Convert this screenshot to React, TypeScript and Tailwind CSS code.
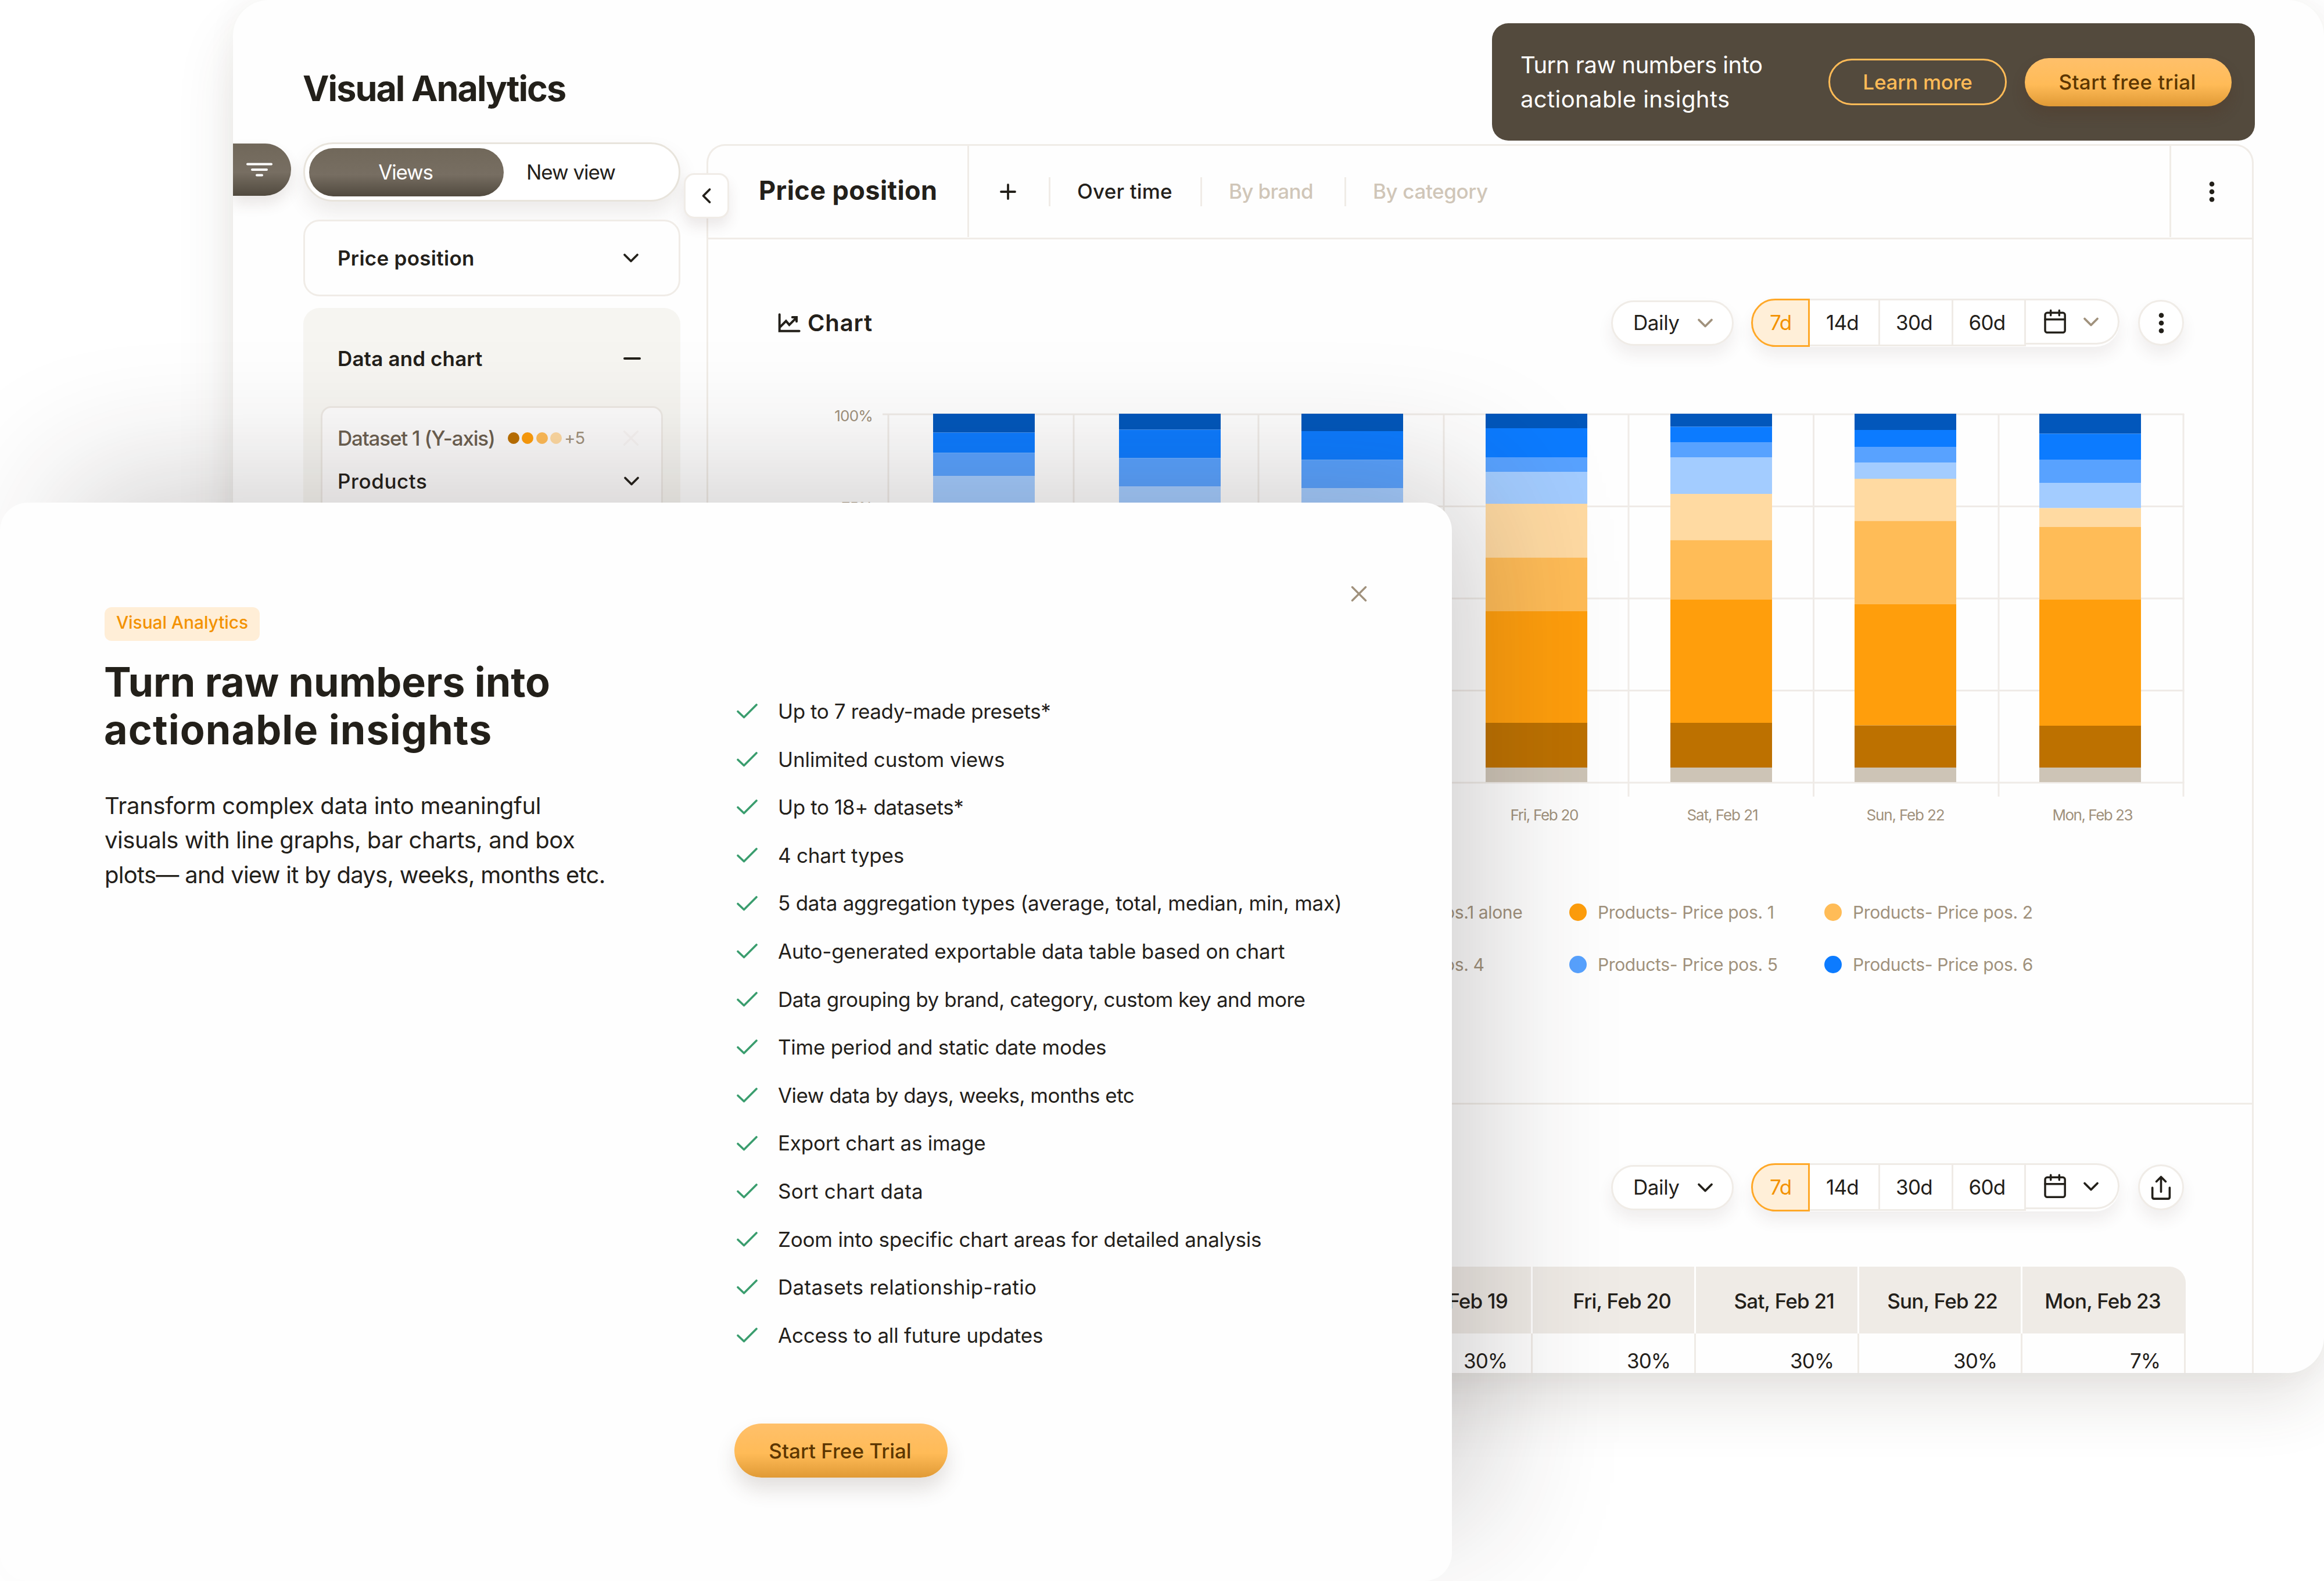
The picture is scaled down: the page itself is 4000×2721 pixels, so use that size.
import type { ReactNode } from "react";
import clsx from "clsx";

const COLORS = [
  "#0257bb",
  "#0c7bff",
  "#58a2ff",
  "#a3ccff",
  "#ffdaa2",
  "#ffbc57",
  "#ff9e0c",
  "#bd7100",
  "#cdc4b6",
];

// Segment heights from the top of each stack, in COLORS order.
const BARS = [
  { x: 1606, parts: [32.5, 35, 40, 60, 80, 100, 190, 71.5, 25] },
  { x: 1926, parts: [27.5, 49, 49, 60, 80, 90, 180, 73.5, 25] },
  { x: 2240, parts: [30, 49.5, 49, 60, 80, 90, 180, 70.5, 25] },
  { x: 2557, parts: [25, 50, 25, 55, 92.5, 92.5, 192, 77, 25] },
  { x: 2875, parts: [22.5, 26.5, 26, 63, 79.5, 102.5, 212, 77, 25] },
  { x: 3192, parts: [28, 29, 27.5, 27.5, 72.5, 143, 209, 72.5, 25] },
  { x: 3510, parts: [34.5, 44.5, 40, 43.5, 32.5, 125, 217, 72, 25] },
];

const DAYS = [
  { label: "Fri, Feb 20", x: 2658.5, width: 118 },
  { label: "Sat, Feb 21", x: 2965, width: 123 },
  { label: "Sun, Feb 22", x: 3280, width: 135 },
  { label: "Mon, Feb 23", x: 3602, width: 139 },
];

const LEGEND = [
  { label: "Price pos.1 alone", dot: "bg-[#bd7100]" },
  { label: "Products- Price pos. 1", dot: "bg-[#ff9e0c]" },
  { label: "Products- Price pos. 2", dot: "bg-[#ffbc57]" },
  { label: "Price pos. 4", dot: "bg-[#a3ccff]" },
  { label: "Products- Price pos. 5", dot: "bg-[#58a2ff]" },
  { label: "Products- Price pos. 6", dot: "bg-[#0c7bff]" },
];

const TABLE = [
  { day: "Thu, Feb 19", value: "30%" },
  { day: "Fri, Feb 20", value: "30%" },
  { day: "Sat, Feb 21", value: "30%" },
  { day: "Sun, Feb 22", value: "30%" },
  { day: "Mon, Feb 23", value: "7%" },
];

const FEATURES = [
  { text: "Up to 7 ready-made presets*", tracking: "tracking-[-0.0115em]" },
  { text: "Unlimited custom views", tracking: "tracking-[-0.0025em]" },
  { text: "Up to 18+ datasets*", tracking: "tracking-[-0.0107em]" },
  { text: "4 chart types", tracking: "tracking-[-0.0065em]" },
  {
    text: "5 data aggregation types (average, total, median, min, max)",
    tracking: "tracking-[-0.0067em]",
  },
  {
    text: "Auto-generated exportable data table based on chart",
    tracking: "tracking-[-0.0044em]",
  },
  {
    text: "Data grouping by brand, category, custom key and more",
    tracking: "tracking-[-0.013em]",
  },
  { text: "Time period and static date modes", tracking: "tracking-[-0.0074em]" },
  { text: "View data by days, weeks, months etc", tracking: "tracking-[-0.0155em]" },
  { text: "Export chart as image", tracking: "tracking-[-0.0055em]" },
  { text: "Sort chart data", tracking: "tracking-[0.0071em]" },
  {
    text: "Zoom into specific chart areas for detailed analysis",
    tracking: "tracking-[-0.0061em]",
  },
  { text: "Datasets relationship-ratio", tracking: "tracking-[0.0098em]" },
  { text: "Access to all future updates", tracking: "tracking-[-0.0054em]" },
];

function Chevron({ className }: { className?: string }) {
  return (
    <svg
      viewBox="0 0 28 18"
      className={clsx("h-[18px] w-7 shrink-0", className)}
      fill="none"
      stroke="currentColor"
      strokeWidth="3.8"
      strokeLinecap="round"
      strokeLinejoin="round"
    >
      <path d="M3 3.5 14 14.5 25 3.5" />
    </svg>
  );
}

function Kebab() {
  return (
    <svg viewBox="0 0 12 40" className="h-10 w-3" fill="currentColor">
      <circle cx="6" cy="6.8" r="4.3" />
      <circle cx="6" cy="20" r="4.3" />
      <circle cx="6" cy="33.2" r="4.3" />
    </svg>
  );
}

function CalendarIcon() {
  return (
    <svg
      viewBox="354 96 114 128"
      className="h-[43px] w-[38px] shrink-0"
      fill="none"
      stroke="currentColor"
      strokeWidth="10.5"
      strokeLinecap="round"
    >
      <rect x="360" y="114.5" width="102.5" height="102" rx="11" />
      <path d="M360 148.5H462M389 102V128M433 102V128" />
    </svg>
  );
}

function ShareIcon() {
  return (
    <svg
      viewBox="902 96 112 132"
      className="h-11 w-[37px]"
      fill="none"
      stroke="currentColor"
      strokeWidth="11"
      strokeLinecap="round"
      strokeLinejoin="round"
    >
      <path d="M913 162V211Q913 220 922 220H994Q1003 220 1003 211V162" />
      <path d="M958 184V106M934 130 958 106 982 130" />
    </svg>
  );
}

function CheckIcon() {
  return (
    <svg
      viewBox="0 0 38 28"
      className="h-7 w-[38px] shrink-0 text-[#3a9d6e]"
      fill="none"
      stroke="currentColor"
      strokeWidth="3.6"
      strokeLinecap="round"
      strokeLinejoin="round"
    >
      <path d="M3 14.5 13.5 24.5 35 3" />
    </svg>
  );
}

function Cross({ className }: { className?: string }) {
  return (
    <svg
      viewBox="0 0 30 30"
      className={clsx("size-[30px]", className)}
      stroke="currentColor"
      strokeWidth="3.4"
      strokeLinecap="round"
    >
      <path d="M3.5 3.5 26.5 26.5M26.5 3.5 3.5 26.5" />
    </svg>
  );
}

function Segment({ className, children }: { className?: string; children: ReactNode }) {
  return (
    <div
      className={clsx(
        "flex h-[82px] items-center justify-center border-y-3 border-r-3 border-[#efebe6] bg-white pr-1.5 tracking-[-0.022em]",
        className,
      )}
    >
      {children}
    </div>
  );
}

function RangeControls({ muted, action }: { muted?: boolean; action: ReactNode }) {
  const chevron = muted ? "text-[#a0917c]" : "text-[#23201a]";

  return (
    <div className="flex items-center text-[35px]">
      <div className="flex h-[78px] w-[211px] items-center justify-between rounded-full border-3 border-[#f0ece7] bg-white pr-8 pl-[35px] shadow-[0_16px_26px_rgba(80,50,50,0.08)]">
        <span className="tracking-[-0.012em]">Daily</span>
        <Chevron className={chevron} />
      </div>

      <div className="ml-[30px] flex items-start rounded-full shadow-[0_16px_26px_rgba(80,50,50,0.08)]">
        <div className="flex h-[83px] w-[101px] items-center justify-center rounded-l-full border-3 border-[#ffa828] bg-[#ffefd8] tracking-[-0.036em] text-[#f39200]">
          7d
        </div>
        <Segment className="w-[121px]">14d</Segment>
        <Segment className="w-[126px]">30d</Segment>
        <Segment className="w-[125px]">60d</Segment>
        <div className="flex h-[79px] w-[161px] items-center justify-between rounded-r-full border-y-3 border-r-3 border-[#efebe6] bg-white pr-[32px] pl-[31px]">
          <CalendarIcon />
          <Chevron className={chevron} />
        </div>
      </div>

      <div className="ml-8 flex size-[79px] items-center justify-center rounded-full border-3 border-[#f0ece7] bg-white shadow-[0_16px_26px_rgba(80,50,50,0.08)]">
        {action}
      </div>
    </div>
  );
}

function StackedChart() {
  const columns = [1529, 1848, 2166, 2485, 2803, 3121.5, 3440, 3758];
  const rows = [713, 871.5, 1030, 1188.5, 1347];

  return (
    <svg
      viewBox="1430 690 2335 730"
      className="mt-[93px] ml-[211px] block h-[730px] w-[2335px]"
    >
      <g stroke="#efebe7" strokeWidth="3">
        {columns.map((x) => (
          <path key={x} d={`M${x} 713V1371`} />
        ))}
        {rows.map((y) => (
          <path key={y} d={`M1519 ${y}H3759.5`} />
        ))}
      </g>

      {BARS.map(({ x, parts }) => {
        let y = 712;
        return parts.map((height, i) => {
          const top = y;
          y += height;
          return <rect key={`${x}-${i}`} x={x} y={top} width="175" height={height} fill={COLORS[i]} />;
        });
      })}

      <g fill="#a0917c" fontSize="26">
        <text x="1502" y="725" textAnchor="end" letterSpacing="-0.8">
          100%
        </text>
        <text x="1502" y="883" textAnchor="end" letterSpacing="-0.8">
          75%
        </text>
        {DAYS.map((day) => (
          <text key={day.label} x={day.x} y="1411.5" textAnchor="middle" textLength={day.width}>
            {day.label}
          </text>
        ))}
      </g>
    </svg>
  );
}

function Sidebar() {
  return (
    <aside className="-mt-[2px] ml-[21px] w-[649px] shrink-0">
      <div className="flex h-[102px] items-center rounded-full border-3 border-[#e8e4dc] bg-white px-[7px] text-[35px] shadow-[0_18px_34px_rgba(80,60,50,0.1)]">
        <div className="flex h-[83px] w-[335px] items-center justify-center rounded-full bg-linear-to-b from-[#71685a] via-[#776e62] via-55% to-[#514a3f] pr-[3px] tracking-[-0.035em] text-white">
          Views
        </div>
        <span className="ml-[39px] tracking-[-0.03em]">New view</span>
      </div>

      <div className="mt-[31px] flex h-[132px] items-center justify-between rounded-[28px] border-3 border-[#f0ece7] bg-[#fefefe] pr-[68px] pl-[56px] text-[35px] font-semibold tracking-[0.0083em]">
        Price position
        <Chevron />
      </div>

      <div className="mt-5 h-[500px] rounded-[28px] bg-[#f6f5f1] px-[30px] pt-[52px]">
        <div className="flex h-[70px] items-center justify-between pr-[38px] pl-[29px] text-[35px] font-semibold tracking-[0.0035em]">
          Data and chart
          <span className="h-1 w-[30px] rounded-full bg-[#23201a]" />
        </div>

        <div className="mt-[47px] h-[400px] rounded-[18px] border-3 border-[#ece8e3] bg-[#fcfbfb] pt-[27px] pr-[37px] pl-[26px] text-[35px] font-medium">
          <div className="flex h-[50px] items-center">
            <span className="tracking-[-0.0345em] text-[#6b5f50]">Dataset 1 (Y-axis)</span>
            <div className="ml-[22px] flex gap-[4.5px]">
              <span className="size-[20px] rounded-full bg-[#bd7100]" />
              <span className="size-[20px] rounded-full bg-[#ff9e0c]" />
              <span className="size-[20px] rounded-full bg-[#ffbc57]" />
              <span className="size-[20px] rounded-full bg-[#ffdaa2]" />
            </div>
            <span className="ml-1 text-[29px] font-normal tracking-[-0.03em] text-[#a0917c]">
              +5
            </span>
            <Cross className="ml-auto text-[#f7f4f3]" />
          </div>
          <div className="mt-6 flex h-[50px] items-center justify-between tracking-[0.0165em]">
            Products
            <Chevron />
          </div>
        </div>
      </div>
    </aside>
  );
}

function Panel() {
  return (
    <main className="relative mt-px ml-[45px] h-[2200px] w-[2663px] shrink-0 rounded-t-[32px] border-x-3 border-t-3 border-[#f0ece7]">
      <div className="absolute top-[47px] -left-[42px] flex size-[78px] items-center justify-center rounded-[18px] border-3 border-[#f0ece7] bg-white shadow-[0_14px_22px_rgba(80,50,50,0.1)]">
        <Chevron className="rotate-90" />
      </div>

      <div className="flex h-[161px] items-center border-b-3 border-[#f0ece7] pb-px text-[35px] font-medium">
        <h2 className="flex h-full w-[449px] items-center border-r-3 border-[#f0ece7] pb-1 pl-[87px] text-[45px] font-bold tracking-[0.0093em]">
          Price position
        </h2>
        <svg
          viewBox="0 0 28 28"
          className="mr-[56px] ml-[53px] size-7"
          stroke="currentColor"
          strokeWidth="3.8"
          strokeLinecap="round"
        >
          <path d="M14 2V26M2 14H26" />
        </svg>
        <div className="flex h-[50px] w-[261px] items-center border-l-3 border-[#f0ece7] pl-[46px] tracking-[0.0053em]">
          Over time
        </div>
        <div className="flex h-[50px] w-[248px] items-center border-l-3 border-[#f0ece7] pl-[46px] tracking-[-0.0179em] text-[#d0c6b8]">
          By brand
        </div>
        <div className="flex h-[50px] items-center border-l-3 border-[#f0ece7] pl-[46px] tracking-[-0.0112em] text-[#d0c6b8]">
          By category
        </div>
        <div className="ml-auto flex h-full w-[142px] items-center justify-center border-l-3 border-[#f0ece7]">
          <Kebab />
        </div>
      </div>

      <section className="h-[1489px] border-b-3 border-[#f0ece7] pt-[102px]">
        <div className="flex items-center justify-between pr-[117px] pl-[120px]">
          <h3 className="flex items-center gap-3 text-[40px] font-semibold tracking-[0.0217em]">
            <svg
              viewBox="57 117 116 100"
              className="h-[33px] w-[39px]"
              fill="none"
              stroke="currentColor"
              strokeWidth="12"
              strokeLinecap="round"
            >
              <path d="M64 124V210H167M66 190 98 158 115 178 152 141M131 138H153V160" />
            </svg>
            Chart
          </h3>
          <RangeControls muted action={<Kebab />} />
        </div>

        <StackedChart />

        {/* the first column runs under the modal */}
        <div className="mt-[105px] grid auto-rows-[90px] grid-cols-[361px_439px_440px] pl-[1121px] text-[30px] text-[#a0917c]">
          {LEGEND.map((item) => (
            <div key={item.label} className="flex items-center gap-[19px] tracking-[-0.012em]">
              <span className={clsx("size-[30px] rounded-full", item.dot)} />
              {item.label}
            </div>
          ))}
        </div>
      </section>

      <section className="pt-[101px]">
        <div className="flex justify-end pr-[117px]">
          <RangeControls action={<ShareIcon />} />
        </div>

        <div className="mt-[95px] mr-[114px] flex justify-end text-[35px] tracking-[-0.022em]">
          {TABLE.map((cell, i) => {
            const last = i === TABLE.length - 1;
            return (
              <div key={cell.day} className="w-[281px]">
                <div
                  className={clsx(
                    "flex h-[115px] items-center justify-end bg-[#efebe6] pt-1 font-medium",
                    last ? "rounded-tr-[28px] pr-[43px]" : "border-r-3 border-white pr-[40px]",
                  )}
                >
                  {cell.day}
                </div>
                <div className="flex h-[94px] items-center justify-end border-r-3 border-[#efebe6] pr-[41px] tracking-[-0.03em]">
                  {cell.value}
                </div>
              </div>
            );
          })}
        </div>
      </section>
    </main>
  );
}

function AnalyticsWindow() {
  return (
    <div className="ml-[401px] h-[2363px] w-[3599px] rounded-[62px] bg-[#fefefe] shadow-[0_56px_110px_-10px_rgba(70,60,45,0.14),0_0_50px_rgba(70,60,45,0.05)]">
      <div className="h-full overflow-hidden rounded-[62px]">
        <header className="flex h-[247px] items-start justify-between pr-[119px] pl-[120px]">
          <h1 className="mt-[112px] text-[61px] leading-[80px] font-bold tracking-[-0.032em]">
            Visual Analytics
          </h1>

          <div className="mt-10 flex h-[202px] w-[1313px] items-center rounded-[28px] bg-[#534a3d] pr-10 pl-[49px]">
            <p className="text-[40px] leading-[59.5px] text-white">
              <span className="block tracking-[-0.0115em]">Turn raw numbers into</span>
              <span className="block tracking-[0.0098em]">actionable insights</span>
            </p>
            <div className="ml-auto flex h-20 w-[307px] items-center justify-center rounded-full border-3 border-[#ffbb57] text-[35px] font-medium tracking-[-0.0064em] text-[#ffbb57]">
              Learn more
            </div>
            <div className="ml-[31px] flex h-[83px] w-[356px] items-center justify-center rounded-full bg-linear-to-b from-[#ffc06a] via-[#ffbb57] via-55% to-[#e09a35] pr-[3px] text-[35px] font-medium tracking-[0.0112em] text-[#5c3600] shadow-[0_14px_24px_rgba(80,40,20,0.2)]">
              Start free trial
            </div>
          </div>
        </header>

        <div className="flex items-start">
          <div className="flex h-[90px] w-[100px] shrink-0 items-center rounded-r-full bg-linear-to-b from-[#71685a] via-[#776e62] via-55% to-[#514a3f] pl-[21px] shadow-[0_14px_24px_rgba(80,60,50,0.12)]">
            <svg
              viewBox="0 0 50 30"
              className="h-[30px] w-[50px]"
              stroke="white"
              strokeWidth="4"
              strokeLinecap="round"
            >
              <path d="M4 5.5H45M12 15H37M20 24.5H29" />
            </svg>
          </div>
          <Sidebar />
          <Panel />
        </div>
      </div>
    </div>
  );
}

function TrialModal() {
  return (
    <div className="absolute top-[865px] left-0 flex h-[1856px] w-[2499px] rounded-[48px] bg-[#fefefe] pl-[180px] shadow-[82px_-70px_240px_-35px_rgba(40,30,30,0.22)]">
      <Cross className="absolute top-[142px] right-[145px] text-[#a0917c]" />

      <div className="w-[1084px] shrink-0 pt-[180px]">
        <div className="flex h-[58px] w-[267px] items-center justify-center rounded-xl bg-[#ffeed7] pb-1.5 text-[30px] font-medium tracking-[-0.0034em] text-[#f39200]">
          Visual Analytics
        </div>
        <h2 className="mt-[30px] -ml-px text-[70px] leading-[82px] font-bold">
          <span className="block tracking-[-0.0016em]">Turn raw numbers into</span>
          <span className="block tracking-[0.0154em]">actionable insights</span>
        </h2>
        <p className="mt-[60px] text-[40px] leading-[59.3px]">
          <span className="block tracking-[-0.0078em]">Transform complex data into meaningful</span>
          <span className="block tracking-[-0.0113em]">
            visuals with line graphs, bar charts, and box
          </span>
          <span className="block tracking-[-0.018em]">
            plots— and view it by days, weeks, months etc.
          </span>
        </p>
      </div>

      <div className="pt-[318px]">
        <ul className="text-[35px]">
          {FEATURES.map((feature) => (
            <li key={feature.text} className="flex h-[82.6px] items-center gap-[34px] pl-[3px]">
              <CheckIcon />
              <span className={feature.tracking}>{feature.text}</span>
            </li>
          ))}
        </ul>
        <div className="mt-[111px] flex h-[93px] w-[367px] items-center justify-center rounded-full bg-linear-to-b from-[#ffc06a] via-[#ffbb57] via-55% to-[#e09a35] pr-[3px] text-[35px] font-medium text-[#5c3600] shadow-[0_20px_34px_rgba(80,60,50,0.16)]">
          Start Free Trial
        </div>
      </div>
    </div>
  );
}

export default function App() {
  return (
    <div className="relative h-[2721px] w-[4000px] overflow-hidden bg-white font-[Inter,sans-serif] whitespace-nowrap text-[#23201a]">
      <AnalyticsWindow />
      <TrialModal />
    </div>
  );
}
